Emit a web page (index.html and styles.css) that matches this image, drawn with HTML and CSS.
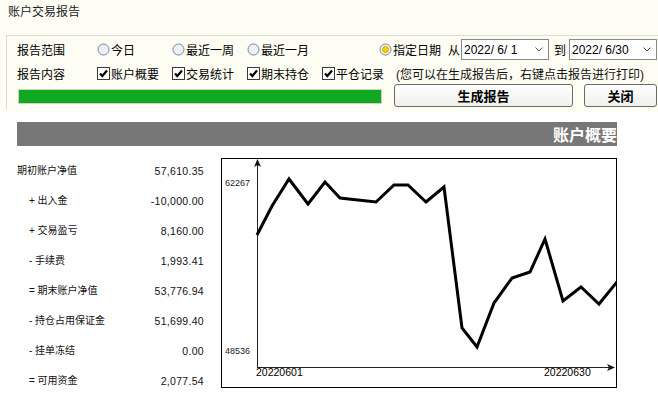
FILE: index.html
```html
<!DOCTYPE html>
<html lang="zh-CN">
<head>
    <meta charset="UTF-8">
    <title>账户交易报告</title>
    <link rel="stylesheet" href="styles.css">
</head>
<body>

<div class="title">账户交易报告</div>

<div class="panel">
    <div class="row">
        <span class="label">报告范围</span>
        <span class="opt"><svg class="radio" viewBox="0 0 13 13"><circle cx="6.5" cy="6.5" r="5.5"/></svg>今日</span>
        <span class="opt"><svg class="radio" viewBox="0 0 13 13"><circle cx="6.5" cy="6.5" r="5.5"/></svg>最近一周</span>
        <span class="opt month"><svg class="radio" viewBox="0 0 13 13"><circle cx="6.5" cy="6.5" r="5.5"/></svg>最近一月</span>
        <span class="opt custom"><svg class="radio on" viewBox="0 0 13 13"><circle cx="6.5" cy="6.5" r="5.5"/><circle class="dot" cx="6.5" cy="6.5" r="3"/></svg>指定日期</span>
        <span class="word">从</span>
        <span class="date">2022/ 6/ 1<svg class="chev" viewBox="0 0 8 5"><path d="M0.5 0.5 L4 4 L7.5 0.5"/></svg></span>
        <span class="word to">到</span>
        <span class="date">2022/ 6/30<svg class="chev" viewBox="0 0 8 5"><path d="M0.5 0.5 L4 4 L7.5 0.5"/></svg></span>
    </div>
    <div class="row second">
        <span class="label">报告内容</span>
        <span class="opt"><svg class="check" viewBox="0 0 13 13"><rect x="0.5" y="0.5" width="12" height="12"/><path d="M3 6.5 L5.3 9 L10 3.5"/></svg>账户概要</span>
        <span class="opt"><svg class="check" viewBox="0 0 13 13"><rect x="0.5" y="0.5" width="12" height="12"/><path d="M3 6.5 L5.3 9 L10 3.5"/></svg>交易统计</span>
        <span class="opt"><svg class="check" viewBox="0 0 13 13"><rect x="0.5" y="0.5" width="12" height="12"/><path d="M3 6.5 L5.3 9 L10 3.5"/></svg>期末持仓</span>
        <span class="opt close"><svg class="check" viewBox="0 0 13 13"><rect x="0.5" y="0.5" width="12" height="12"/><path d="M3 6.5 L5.3 9 L10 3.5"/></svg>平仓记录</span>
        <span class="note">(您可以在生成报告后，右键点击报告进行打印)</span>
    </div>
    <div class="row actions">
        <div class="progress"></div>
        <button class="btn make">生成报告</button>
        <button class="btn quit">关闭</button>
    </div>
</div>

<div class="report">
    <div class="section-bar">账户概要</div>
    <div class="summary">
        <div class="list">
            <div class="item"><span>期初账户净值</span><span class="num">57,610.35</span></div>
            <div class="item sub"><span>+ 出入金</span><span class="num">-10,000.00</span></div>
            <div class="item sub"><span>+ 交易盈亏</span><span class="num">8,160.00</span></div>
            <div class="item sub"><span>- 手续费</span><span class="num">1,993.41</span></div>
            <div class="item sub"><span>= 期末账户净值</span><span class="num">53,776.94</span></div>
            <div class="item sub"><span>- 持仓占用保证金</span><span class="num">51,699.40</span></div>
            <div class="item sub"><span>- 挂单冻结</span><span class="num">0.00</span></div>
            <div class="item sub"><span>= 可用资金</span><span class="num">2,077.54</span></div>
        </div>
        <svg class="chart" width="396" height="231" viewBox="0 0 396 231">
            <rect class="frame" x="0.5" y="0.5" width="395" height="229"/>
            <line class="axis" x1="36.5" y1="3" x2="36.5" y2="209.5"/>
            <line class="axis" x1="36" y1="209.5" x2="392" y2="209.5"/>
            <path class="arrow" d="M36.5 1 L33 9 L36.5 7 L40 9 Z"/>
            <path class="arrow" d="M394 209.5 L386 206 L388 209.5 L386 213 Z"/>
            <polyline class="line" points="36,77 51,48 68,21 87,46 104,24 119,40 137,42 155,44 173,27 187,27 205,44 223,29 241,170 256,189 273,145 291,120 309,114 324,81 342,143 360,129 378,146 396,124"/>
            <text class="ylab" x="4" y="28">62267</text>
            <text class="ylab" x="4" y="196">48536</text>
            <text class="xlab" x="35" y="218">20220601</text>
            <text class="xlab" x="323" y="218">20220630</text>
        </svg>
    </div>
</div>

</body>
</html>
```

FILE: styles.css
```css
body {
    margin: 0;
    width: 658px;
    height: 404px;
    overflow: hidden;
    background: #fdfdf3;
    font-family: "Liberation Sans", "Noto Sans CJK SC", sans-serif;
    font-size: 12px;
    color: #000;
}
.title {
    height: 35px;
    box-sizing: border-box;
    padding: 5px 0 0 8px;
    line-height: 14px;
    color: #222;
}
.panel {
    margin-left: 6px;
    height: 75px;
    box-sizing: border-box;
    padding: 2px 0 0 10px;
    border-top: 1px solid #dcdcd0;
    border-left: 1px solid #dcdcd0;
}
.row {
    display: flex;
    align-items: center;
    height: 23px;
    white-space: nowrap;
}
.row.second {
    height: 24px;
}
.row.actions {
    margin-top: -1px;
    align-items: flex-start;
}
.label {
    width: 80px;
}
.opt {
    display: flex;
    align-items: center;
    width: 75px;
}
.opt.month {
    width: 132px;
}
.opt.custom {
    width: 69px;
}
.opt.close {
    width: 74px;
}
.radio {
    width: 13px;
    height: 13px;
    margin-right: 1px;
}
.radio circle {
    fill: #eef0f4;
    stroke: #6f88a6;
    stroke-width: 1;
}
.radio.on circle {
    fill: #f4f2e2;
}
.radio.on .dot {
    fill: #f2d200;
    stroke: #c89a00;
    stroke-width: 0.8;
}
.check {
    width: 13px;
    height: 13px;
    margin-right: 1px;
}
.check rect {
    fill: #fff;
    stroke: #3a3a3a;
}
.check path {
    fill: none;
    stroke: #000;
    stroke-width: 2.2;
}
.word {
    width: 13px;
}
.word.to {
    margin-left: 5px;
    width: 15px;
}
.date {
    display: flex;
    align-items: center;
    justify-content: space-between;
    width: 88px;
    height: 21px;
    box-sizing: border-box;
    padding: 0 5px 0 2px;
    background: #fff;
    border: 1px solid #8a8a8a;
    font-size: 12px;
    white-space: pre;
}
.chev {
    width: 8px;
    height: 5px;
}
.chev path {
    fill: none;
    stroke: #555;
}
.note {
    color: #111;
}
.progress {
    width: 364px;
    height: 15px;
    margin: 5px 0 0 1px;
    background: #10a820;
    border: 1px solid #d0d0c8;
    box-sizing: border-box;
}
.btn {
    height: 23px;
    padding: 0;
    background: linear-gradient(#ffffff, #f0f0ec);
    border: 1px solid #6a6a6a;
    border-radius: 3px;
    font-family: "Noto Sans CJK SC", sans-serif;
    font-size: 13px;
    font-weight: bold;
    color: #000;
}
.btn.make {
    width: 179px;
    margin-left: 12px;
}
.btn.quit {
    width: 73px;
    margin-left: 11px;
}
.report {
    margin-top: 2px;
    height: 292px;
    padding-top: 10px;
    box-sizing: border-box;
    background: #fff;
}
.section-bar {
    margin-left: 17px;
    width: 600px;
    height: 24px;
    line-height: 24px;
    background: #777;
    color: #fff;
    text-align: right;
    font-family: "Noto Sans CJK SC", sans-serif;
    font-size: 16px;
    font-weight: bold;
}
.summary {
    display: flex;
    align-items: flex-start;
    margin-top: 10px;
    padding-left: 17px;
}
.list {
    width: 187px;
}
.item {
    display: flex;
    justify-content: space-between;
    height: 30px;
    line-height: 30px;
    font-size: 10px;
    color: #111;
}
.item.sub {
    padding-left: 12px;
}
.num {
    font-size: 10.5px;
    letter-spacing: 0.3px;
}
.chart {
    display: block;
    margin: 2px 0 0 17px;
}
.frame {
    fill: #fff;
    stroke: #000;
}
.axis {
    stroke: #222;
    stroke-width: 1;
}
.arrow {
    fill: #111;
}
.line {
    fill: none;
    stroke: #000;
    stroke-width: 3;
    stroke-linejoin: miter;
}
.ylab {
    font-family: "Liberation Sans", sans-serif;
    font-size: 9px;
    fill: #222;
}
.xlab {
    font-family: "Liberation Sans", sans-serif;
    font-size: 10.5px;
    fill: #000;
}
```
